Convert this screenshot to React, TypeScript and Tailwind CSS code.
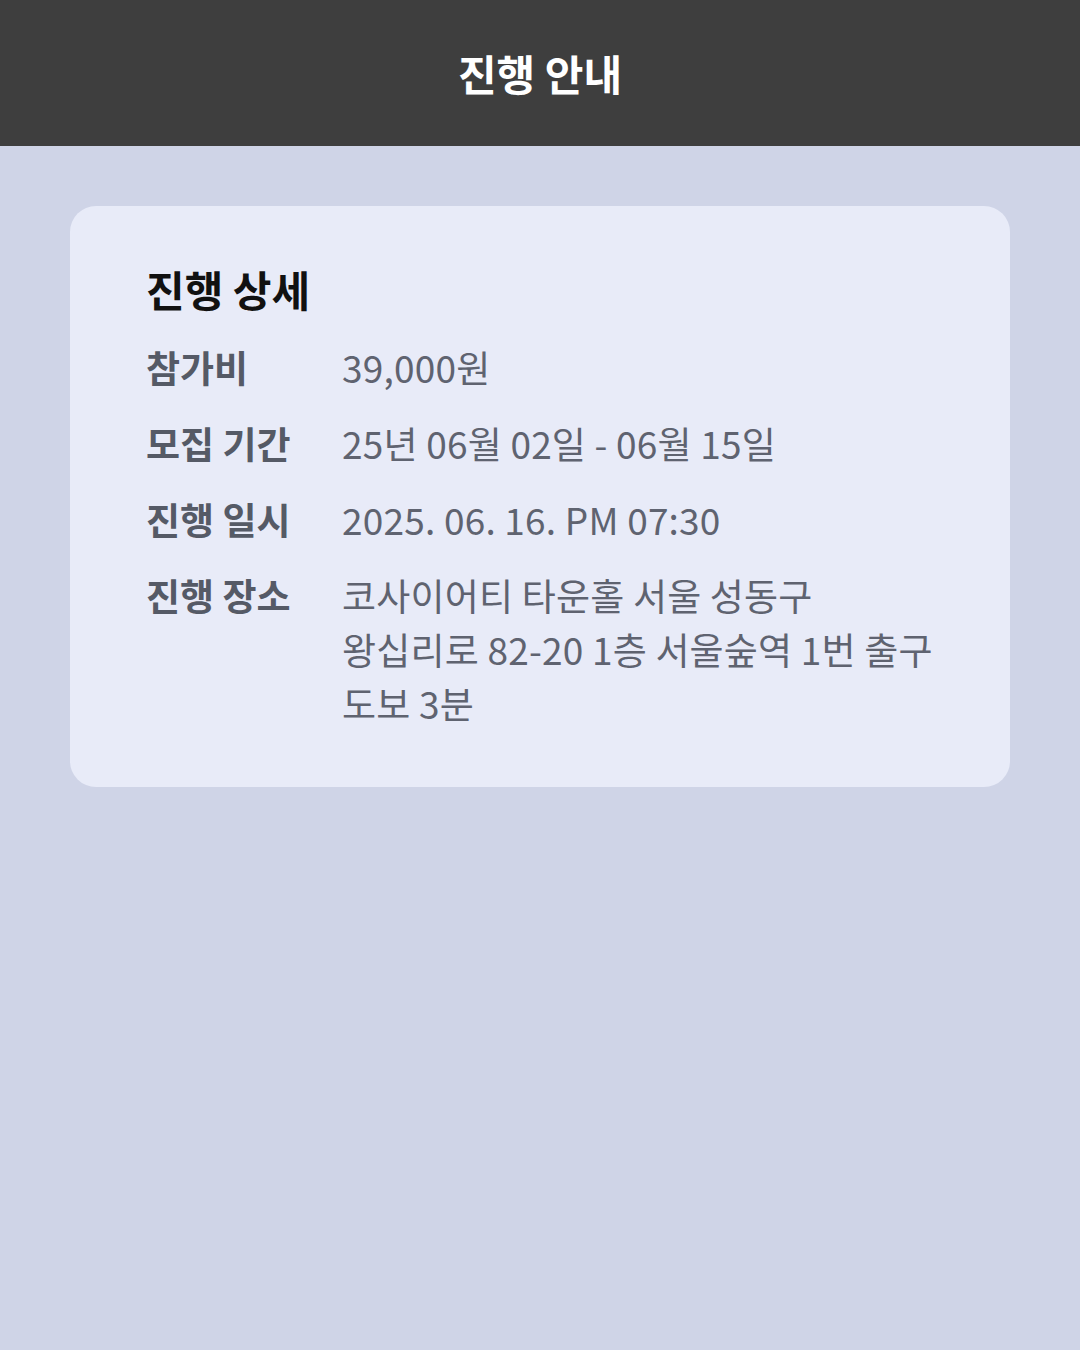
import React from "react";

const rows: { label: string; lines: string[] }[] = [
  { label: "참가비", lines: ["39,000원"] },
  { label: "모집 기간", lines: ["25년 06월 02일 - 06월 15일"] },
  { label: "진행 일시", lines: ["2025. 06. 16. PM 07:30"] },
  {
    label: "진행 장소",
    lines: ["코사이어티 타운홀 서울 성동구", "왕십리로 82-20 1층 서울숲역 1번 출구", "도보 3분"],
  },
];

export default function App() {
  return (
    <div
      className="min-h-[1350px] w-full bg-[#cfd4e7]"
      style={{ fontFamily: '"Noto Sans CJK KR", "Noto Sans", sans-serif' }}
    >
      <header className="flex h-[146px] items-center justify-center bg-[#3e3e3e]">
        <h1 className="text-[42px] font-bold leading-none text-white">진행 안내</h1>
      </header>
      <main className="px-[70px] pt-[60px]">
        <section className="rounded-[26px] bg-[#e8ebf8] px-[76px] pb-[57px] pt-[58px]">
          <h2 className="text-[42px] font-bold leading-[50px] text-[#111111]">진행 상세</h2>
          <div className="mt-[26px] flex flex-col gap-[22px]">
            {rows.map((r) => (
              <div key={r.label} className="flex text-[37px] leading-[54px]">
                <div className="w-[196px] shrink-0 font-semibold text-[#555a66]">{r.label}</div>
                <div className="flex flex-col tracking-[0.2px] text-[#5f6370]">
                  {r.lines.map((l) => (
                    <span key={l} className="whitespace-nowrap">
                      {l}
                    </span>
                  ))}
                </div>
              </div>
            ))}
          </div>
        </section>
      </main>
    </div>
  );
}
